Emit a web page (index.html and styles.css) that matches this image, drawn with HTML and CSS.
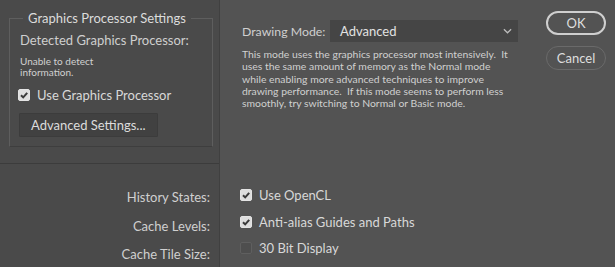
FILE: index.html
```html
<!DOCTYPE html>
<html>
<head>
    <title>Performance</title>
    <link rel="stylesheet" href="styles.css">
</head>
<body>
    <div class="dialog">
        <div class="left">
            <fieldset class="gpu">
                <legend>Graphics Processor Settings</legend>
                <div class="detected">Detected Graphics Processor:</div>
                <div class="small-note">Unable to detect<br>information.</div>
                <label class="check">
                    <span class="box on"><svg viewBox="0 0 12 12"><path d="M3 6.2 L5.2 8.4 L9.2 3.8" /></svg></span>
                    Use Graphics Processor
                </label>
                <button class="adv">Advanced Settings...</button>
            </fieldset>
            <div class="labels">
                <div class="row-label">History States:</div>
                <div class="row-label">Cache Levels:</div>
                <div class="row-label">Cache Tile Size:</div>
            </div>
        </div>
        <div class="right">
            <div class="top">
                <div class="mode">
                    <div class="mode-row">
                        <span class="mode-label">Drawing Mode:</span>
                        <div class="select">
                            <span>Advanced</span>
                            <svg class="chev" viewBox="0 0 10 6"><path d="M1 1 L5 5 L9 1" /></svg>
                        </div>
                    </div>
                    <p class="desc">This mode uses the graphics processor most intensively.&nbsp; It uses the same amount of memory as the Normal mode while enabling more advanced techniques to improve drawing performance.&nbsp; If this mode seems to perform less smoothly, try switching to Normal or Basic mode.</p>
                </div>
                <div class="buttons">
                    <button class="pill ok">OK</button>
                    <button class="pill">Cancel</button>
                </div>
            </div>
            <div class="options">
                <label class="check">
                    <span class="box on"><svg viewBox="0 0 12 12"><path d="M3 6.2 L5.2 8.4 L9.2 3.8" /></svg></span>
                    Use OpenCL
                </label>
                <label class="check">
                    <span class="box on"><svg viewBox="0 0 12 12"><path d="M3 6.2 L5.2 8.4 L9.2 3.8" /></svg></span>
                    Anti-alias Guides and Paths
                </label>
                <label class="check">
                    <span class="box"></span>
                    30 Bit Display
                </label>
            </div>
        </div>
    </div>
</body>
</html>
```

FILE: styles.css
```css
html, body { margin: 0; padding: 0; }
body { background: #535353; font-family: "Lato", "Open Sans", sans-serif; color: #d4d4d4; }
.dialog { display: flex; width: 615px; height: 267px; overflow: hidden; }

.left { width: 219px; background: #4a4a4a; border-right: 1px solid #404040; flex: none; }
.gpu { margin: 10px 6px 0 9px; padding: 0 10px 9px 10px; border: 1px solid #5e5e5e; border-bottom-color: #3e3e3e; }
.gpu legend { margin-left: 3px; padding: 0 5px; font-size: 13px; color: #dcdcdc; line-height: 16px; }
.detected { margin-top: 6px; font-size: 13px; color: #cfcfcf; line-height: 16px; }
.small-note { margin-top: 8px; font-size: 10px; line-height: 11px; color: #d0d0d0; }

.check { display: flex; align-items: center; gap: 7px; font-size: 13px; color: #d8d8d8; line-height: 16px; }
.gpu .check { margin-top: 9px; margin-left: -2px; }
.box { width: 12px; height: 12px; border-radius: 2px; background: #4e4e4e; border: 1px solid #5f5f5f; box-sizing: border-box; display: inline-flex; }
.box.on { background: #dedede; border-color: #e4e4e4; }
.box svg { width: 12px; height: 12px; margin: -1px; }
.box svg path { fill: none; stroke: #3a3a3a; stroke-width: 2; }

.adv { margin-top: 10px; margin-left: -1px; height: 24px; padding: 0 11px; background: #414141; border: 1px solid #3c3c3c; color: #dcdcdc; font-family: inherit; font-size: 13px; border-radius: 1px; }

.labels { border-top: 1px solid #3c3c3c; margin-top: 16px; padding-top: 25px; }
.row-label { text-align: right; padding-right: 9px; font-size: 13px; color: #d0d0d0; line-height: 16px; margin-bottom: 12.5px; }

.right { flex: 1; padding: 20px 10px 0 22px; }
.top { display: flex; gap: 28px; }
.mode { width: 276px; }
.mode-row { display: flex; align-items: center; }
.mode-label { font-size: 12.3px; color: #cfcfcf; width: 88px; white-space: nowrap; flex: none; }
.select { flex: 1; height: 22px; background: #454545; display: flex; align-items: center; justify-content: space-between; padding: 0 6px 0 10px; font-size: 13px; color: #e2e2e2; }
.chev { width: 9px; height: 6px; }
.chev path { fill: none; stroke: #bdbdbd; stroke-width: 1.4; }
.desc { margin: 6px 0 0 0; width: 268px; font-size: 10.4px; line-height: 12.3px; color: #d0d0d0; }

.buttons { display: flex; flex-direction: column; gap: 11px; margin-top: -9px; }
.pill { width: 60px; height: 24px; border-radius: 12px; background: transparent; border: 1px solid #6a6a6a; color: #dedede; font-family: inherit; font-size: 13px; }
.pill.ok { border: 2px solid #cfcfcf; }

.options { margin-top: 78px; margin-left: -2px; display: flex; flex-direction: column; gap: 10.5px; }
```
